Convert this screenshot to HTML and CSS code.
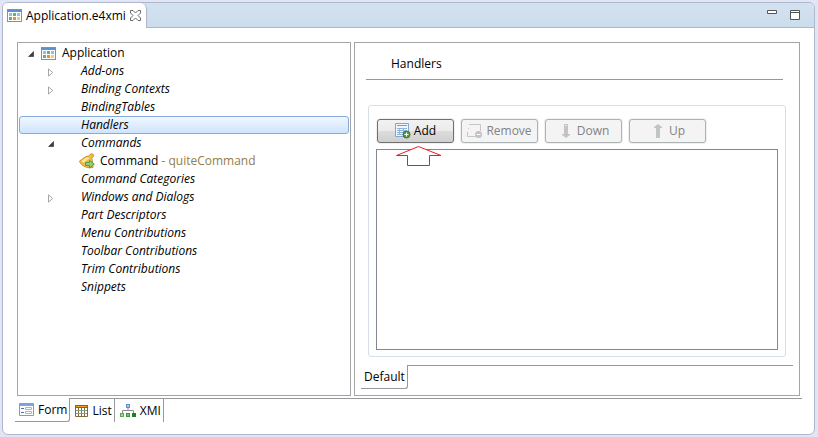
FILE: index.html
```html
<!DOCTYPE HTML>
<html lang="en">
<head>
<meta charset="utf-8">
<title>Application.e4xmi</title>
<link rel="stylesheet" href="styles.css">
</head>

<body>
<!-- icons used more than once -->
<svg class="defs" aria-hidden="true">
	<symbol id="app" viewBox="0 0 15 13">
		<path fill="#6f93c8" d="M0 0h15v13H0z"/>
		<path fill="#5b8fd6" d="M1 1h13v2H1z"/>
		<path fill="#fff" d="M1 3h13v9H1z"/>
		<path fill="#8fc0f0" d="M2 4h3v3H2zM10 4h3v3h-3z"/>
		<path fill="#6db06a" d="M6 4h3v3H6zM2 8h3v3H2z"/>
		<path fill="#f08a3c" d="M6 8h3v3H6z"/>
		<path fill="#f5cf5a" d="M10 8h3v3h-3z"/>
	</symbol>
	<symbol id="open" viewBox="0 0 6 6">
		<path fill="#404040" stroke="#262626" stroke-width=".6" d="M5.6.5v5H.6z"/>
	</symbol>
	<symbol id="closed" viewBox="0 0 6 9">
		<path fill="#fff" stroke="#a6a6a6" d="M.5.9v7.2l4.2-3.6z"/>
	</symbol>
</svg>

<div class="window">
	<div class="header">
		<div class="file-tab">
			<svg class="icon-app"><use href="#app"/></svg>
			<span>Application.e4xmi</span>
			<button class="tool" aria-label="Close">
				<svg width="11" height="11"><path fill="#fff" stroke="#6b6b6b" d="M.5.5h2.5L5.500 3 8 .5h2.500v2.500L8 5.500l2.500 2.500v2.500H8L5.500 8 3 10.500H.5V8L3 5.500.5 3z"/></svg>
			</button>
		</div>
		<div class="window-tools">
			<button class="tool" aria-label="Minimize">
				<svg width="10" height="10"><path fill="#fff" stroke="#555" d="M.5.5h9v3h-9z"/></svg>
			</button>
			<button class="tool" aria-label="Maximize">
				<svg width="10" height="10"><path fill="#fff" stroke="#555" d="M.5.5h9v9h-9zM.5 2.500h9"/></svg>
			</button>
		</div>
	</div>

	<div class="panes">
		<ul class="tree">
			<li class="root"><button class="toggle" aria-label="Collapse"><svg class="arrow-open"><use href="#open"/></svg></button><svg class="icon-app"><use href="#app"/></svg>Application</li>
			<li><button class="toggle" aria-label="Expand"><svg class="arrow-closed"><use href="#closed"/></svg></button>Add-ons</li>
			<li><button class="toggle" aria-label="Expand"><svg class="arrow-closed"><use href="#closed"/></svg></button>Binding Contexts</li>
			<li>BindingTables</li>
			<li class="selected">Handlers</li>
			<li><button class="toggle" aria-label="Collapse"><svg class="arrow-open"><use href="#open"/></svg></button>Commands</li>
			<li class="command">
				<svg width="16" height="16">
					<path fill="#eebb42" stroke="#c99530" d="M.5 8C3.500 6.500 5.500 3.200 9.500 3L12 .8l2.200.4.3 2.300-1.800 1.700c1.300 3 .8 6 1.300 9.300C9 15.500 2 13.500.5 8z"/>
					<path fill="#fbe6a0" d="M2.500 8C5 6.500 6.500 4.300 9 4l1.500 1.500C8 6.500 6.500 8.500 4.500 10z"/>
					<path fill="#8fd07a" stroke="#4f9f4a" d="M6.500 9.500h4v-2l4.800 3.700-4.800 3.800v-2.500h-4z"/>
				</svg>
				<span>Command <span class="hint">- quiteCommand</span></span>
			</li>
			<li>Command Categories</li>
			<li><button class="toggle" aria-label="Expand"><svg class="arrow-closed"><use href="#closed"/></svg></button>Windows and Dialogs</li>
			<li>Part Descriptors</li>
			<li>Menu Contributions</li>
			<li>Toolbar Contributions</li>
			<li>Trim Contributions</li>
			<li>Snippets</li>
		</ul>

		<div class="detail">
			<h1>Handlers</h1>
			<div class="group">
				<div class="buttons">
					<button class="add">
						<svg width="16" height="16">
							<path fill="#eef5fd" stroke="#7fa6d6" d="M.5.5h13v13H.5z"/>
							<path fill="#6fb36a" d="M2 2h10v1H2z"/>
							<path stroke="#8fb4e0" d="M2 5.500h10M2 7.500h10M2 9.500h10M2 11.500h6M4.500 5v7M8.500 5v7"/>
							<circle cx="11.500" cy="11.500" r="3.500" fill="#5c9a35" stroke="#3f7424"/>
							<path stroke="#fff" d="M9.500 11.500h4M11.500 9.500v4"/>
						</svg>
						Add
					</button>
					<button disabled>
						<svg width="16" height="16">
							<path fill="none" stroke="#c6c6c6" d="M2 1.500h11.500V8M.5 9v4.500h8M1 5.500h1"/>
							<circle cx="11.500" cy="11.500" r="3.500" fill="#c2c2c2"/>
							<path stroke="#fff" d="M9.500 11.500h4"/>
						</svg>
						Remove
					</button>
					<button disabled>
						<svg width="16" height="16"><path fill="#c4c4c4" d="M6 1h4v10h2v1l-4 3-4-3v-1h2z"/><path fill="#eee" d="M7 2h2v1H7z"/></svg>
						Down
					</button>
					<button disabled>
						<svg width="16" height="16"><path fill="#c4c4c4" d="M8 1l4 3v1h-2v10H6V5H4V4z"/></svg>
						Up
					</button>
				</div>
				<div class="list">
					<svg class="pointer" width="46" height="21"><path fill="#fff" stroke="#ed1c24" d="M22.500.5L45 9.500H33.500v10h-22v-10H.5z"/></svg>
				</div>
			</div>
			<div class="tabs sub-tabs">
				<button class="tab current">Default</button>
				<div class="rest"></div>
			</div>
		</div>
	</div>

	<div class="tabs page-tabs">
		<button class="tab current">
			<svg width="15" height="13">
				<path fill="#fff" stroke="#7c9dcc" d="M.5.5h14v12H.5z"/>
				<path fill="#7aa7e0" d="M1 1h13v2H1z"/>
				<path stroke="#3f6fc0" d="M2 5.500h3M2 9.500h3"/>
				<path fill="none" stroke="#b4b4b4" d="M6.500 4.500h6v2h-6zM6.500 8.500h6v2h-6z"/>
			</svg>
			Form
		</button>
		<button class="tab">
			<svg width="13" height="12">
				<path fill="#fff" d="M0 0h13v12H0z"/>
				<path fill="none" stroke="#7f6a3c" d="M.5.5h12v11H.5zM3.500 3v9M6.500 3v9M9.500 3v9"/>
				<path stroke="#86a08c" d="M1 5.500h11M1 8.500h11"/>
				<path fill="#b5500c" d="M0 0h13v3H0z"/>
				<path fill="#f0a020" d="M1 1h11v1H1z"/>
			</svg>
			List
		</button>
		<button class="tab">
			<svg width="16" height="14">
				<path fill="none" stroke="#8c8c8c" d="M8 4v3M2.500 9V6.500h11V9"/>
				<path fill="#5b8fdc" d="M6 0h4v4H6z"/><path fill="#a5c8f5" d="M7 1h2v2H7z"/>
				<path fill="#5aa852" d="M0 9h4v4H0z"/><path fill="#a4d89a" d="M1 10h2v2H1z"/>
				<path fill="#3f963c" d="M6 9h4v4H6z"/><path fill="#78c070" d="M7 10h2v2H7z"/>
				<path fill="#1f7f22" d="M12 9h4v4h-4z"/>
			</svg>
			XMI
		</button>
		<div class="rest"></div>
	</div>
</div>
</body>
</html>
```
FILE: styles.css
```css
* {
	box-sizing: border-box;
}
body {
	margin: 0;
	padding: 2px 3px 2px 2px;
	min-height: 100vh;
	display: flex;
	background: #e0e6f6;
	color: #000;
	font: 12px/18px "Open Sans", "Noto Sans", sans-serif;
}
svg {
	display: block;
	flex: none;
}
button {
	font: inherit;
	color: inherit;
	margin: 0;
	padding: 0;
}
.defs {
	position: absolute;
	width: 0;
	height: 0;
}
.window {
	flex: 1;
	display: flex;
	flex-direction: column;
	background: #fff;
	border: 1px solid #b0b7cb;
	border-radius: 6px;
	padding-bottom: 12px;
	overflow: hidden;
}

/* title strip */
.header {
	display: flex;
	justify-content: space-between;
	height: 25px;
	background: linear-gradient(#d3e2f0, #cbdcec);
	box-shadow: inset 0 -1px #b0b7cb;
}
.file-tab {
	display: flex;
	align-items: center;
	gap: 4px;
	padding: 0 5px 0 4px;
	background: #fff;
	border-right: 1px solid #b0b7cb;
	border-top-right-radius: 6px;
}
.icon-app {
	width: 15px;
	height: 13px;
}
.tool {
	border: 0;
	background: none;
}
.window-tools {
	display: flex;
	align-items: flex-start;
	gap: 13px;
	padding: 7px 14px;
}

/* tree and detail pane */
.panes {
	flex: 1;
	display: grid;
	grid-template-columns: 334fr 446fr;
	gap: 3px;
	padding: 14px 14px 2px;
}
.tree, .detail {
	border: 1px solid #a3a3a8;
}
.tree {
	margin: 0;
	padding: 1px;
	list-style: none;
	font-style: italic;
}
.tree li {
	position: relative;
	display: flex;
	align-items: center;
	height: 18px;
	padding-left: 62px;
	white-space: nowrap;
}
.tree .root {
	padding-left: 22px;
	gap: 6px;
	font-style: normal;
}
.tree .command {
	padding-left: 60px;
	gap: 5px;
	font-style: normal;
}
.tree .selected {
	border: 1px solid #84acdd;
	border-radius: 3px;
	padding-left: 61px;
	background: linear-gradient(#f0f7ff, #cfe4fd);
}
.toggle {
	position: absolute;
	left: 29px;
	top: 4px;
	width: 10px;
	height: 12px;
	display: flex;
	align-items: center;
	border: 0;
	background: none;
}
.root .toggle {
	left: 9px;
}
.arrow-open {
	width: 6px;
	height: 6px;
}
.arrow-closed {
	width: 6px;
	height: 9px;
}
.hint {
	color: #957d47;
}
.detail {
	display: flex;
	flex-direction: column;
	padding: 12px 6px 6px;
}
.detail h1 {
	margin: 0 10px 25px 5px;
	padding: 0 25px 6px;
	border-bottom: 1px solid #98989c;
	font-size: 12px;
	font-weight: normal;
	line-height: 18px;
}
.group {
	flex: 1;
	display: flex;
	flex-direction: column;
	gap: 6px;
	margin: 0 7px 8px;
	padding: 13px 7px 6px;
	border: 1px solid #d5dfe8;
	border-radius: 3px;
}
.buttons {
	display: flex;
	gap: 7px;
	padding-left: 1px;
}
.buttons button {
	display: flex;
	align-items: center;
	justify-content: center;
	gap: 3px;
	width: 77px;
	height: 24px;
	border: 1px solid #adb2b5;
	border-radius: 3px;
	background: #f4f4f4;
	box-shadow: 0 0 0 1px #f0f0f0;
	color: #838383;
}
.buttons .add {
	border-color: #707070;
	background: linear-gradient(#f2f2f2, #ebebeb 50%, #dddddd 50%, #cfcfcf);
	color: #000;
}
.list {
	position: relative;
	flex: 1;
	min-height: 120px;
	border: 1px solid #828790;
}
.pointer {
	position: absolute;
	left: 19px;
	top: -4px;
}

/* tabs hanging from a line */
.tabs {
	display: flex;
	height: 24px;
}
.tab {
	display: flex;
	align-items: center;
	gap: 4px;
	padding: 0 2px 0 4px;
	border: 0 solid #98989c;
	border-width: 1px 1px 0 0;
	background: #fff;
}
.tab.current {
	border-width: 0 1px 1px 0;
	border-bottom-right-radius: 3px;
}
.sub-tabs .tab {
	padding-left: 3px;
}
.rest {
	flex: 1;
	border-top: 1px solid #98989c;
}
.page-tabs {
	margin: 0 12px;
}
.page-tabs .tab + .tab {
	padding-left: 5px;
}
```
